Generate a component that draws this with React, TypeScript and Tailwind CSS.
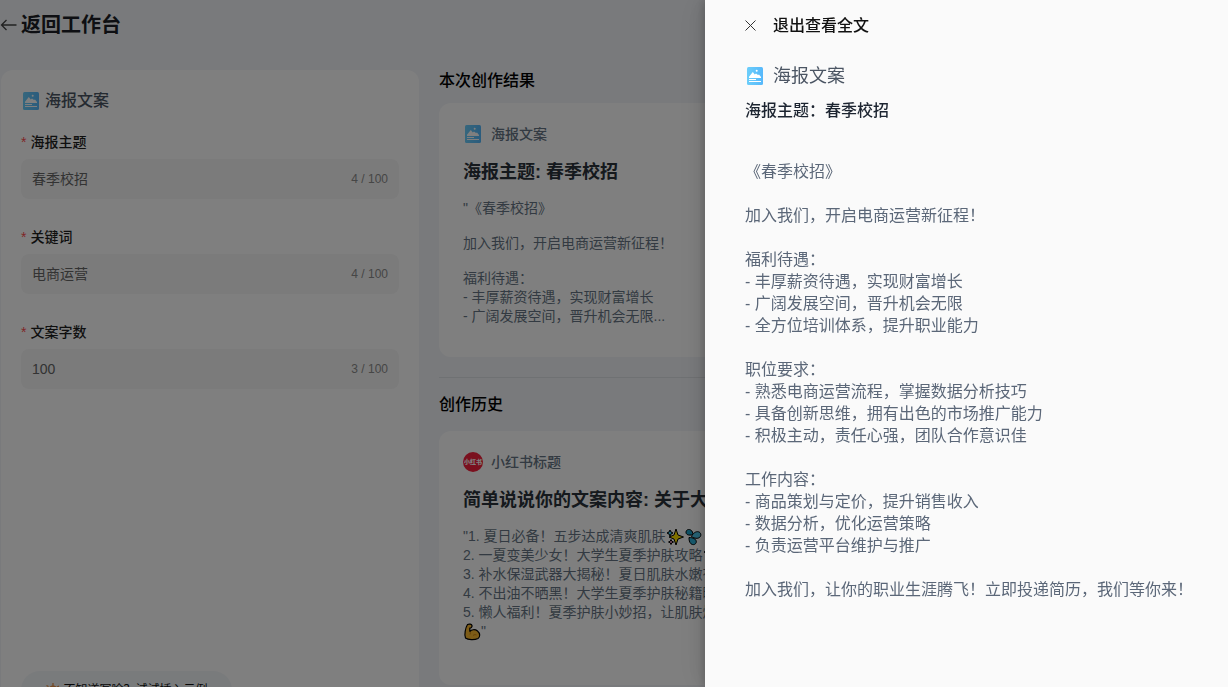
import React from "react";

type PosterIconProps = { className?: string };

function PosterIcon({ className }: PosterIconProps) {
  return (
    <svg viewBox="0 0 16 18" className={className} aria-hidden="true">
      <defs>
        <linearGradient id="poster-fill" x1="0" y1="0" x2="1" y2="0">
          <stop offset="0" stopColor="#6ccefa" />
          <stop offset="1" stopColor="#56b8fb" />
        </linearGradient>
      </defs>
      <rect width="16" height="18" rx="1.5" fill="url(#poster-fill)" />
      <path d="M2 11V9.800L5.800 5L7.800 7.600L9 6.400L11 8L12 7.500L14 10V11Z" fill="#fff" />
      <circle cx="9.700" cy="3.800" r="1" fill="#fff" />
      <path d="M2 12.500h7M2 14.500h12" stroke="#fff" strokeWidth="1" />
    </svg>
  );
}

function RedBookIcon() {
  return (
    <span className="flex size-5 shrink-0 items-center justify-center rounded-full bg-[#f5203c] text-[6px] leading-none font-black whitespace-nowrap text-white">
      小红书
    </span>
  );
}

function SparklesEmoji() {
  return (
    <svg viewBox="0 0 18 18" className="inline size-[18px] align-middle" role="img" aria-label="sparkles">
      <g stroke="#000" strokeWidth="1" strokeLinejoin="round">
        <path d="M10 1 L12 7 L17.500 9 L12 11 L10 17 L8 11 L3 9 L8 7 Z" fill="#fde000" />
        <path d="M4 2 L5 4 L7 5 L5 6 L4 8 L3 6 L1 5 L3 4 Z" fill="#3fc8f0" />
        <path d="M5 11.500 L5.800 13.200 L7.500 14 L5.800 14.800 L5 16.500 L4.200 14.800 L2.500 14 L4.200 13.200 Z" fill="#f59ac0" />
      </g>
    </svg>
  );
}

function DropsEmoji() {
  return (
    <svg viewBox="0 0 18 18" className="inline size-[18px] align-middle" role="img" aria-label="water drops">
      <g stroke="#000" strokeWidth="1" strokeLinejoin="round">
        <path d="M9 6.500 C4.500 8 1.800 6.500 2 4 C2.300 1.500 5 .8 7 2.200 C8.300 3.200 8.800 4.500 9 6.500 Z" fill="#1fa5cc" />
        <path d="M7.500 8.500 C9 5 12 3.200 14.500 3.800 C17 4.500 17.600 7.500 15.800 9.200 C13.800 11 10.500 10.500 7.500 8.500 Z" fill="#4fc6ea" />
        <path d="M5 9.500 C9 9.500 12.300 11 12.300 13.800 C12.200 16.500 9 17.500 7 15.800 C5.300 14.200 5 12 5 9.500 Z" fill="#2fb4dc" />
      </g>
    </svg>
  );
}

function MuscleEmoji() {
  return (
    <svg viewBox="0 0 18 18" className="inline size-[18px] align-middle" role="img" aria-label="flexed arm">
      <path
        d="M4.500 1.500 C6 .8 8.500 1 9 2.500 C9.300 4 8 5 6.800 5 L6.800 8.500 C8.500 6.500 12 6 14.500 8 C17.500 10.500 17.200 14 15 15.500 C11.500 17.200 5 17 2.500 15 C1 12 2.500 4.500 4.500 1.500 Z"
        fill="#fbb92e"
        stroke="#000"
        strokeWidth="1.200"
        strokeLinejoin="round"
      />
      <path
        d="M6.800 8.500 C7.500 9.500 7.500 10.500 7 11.500 M10 12.500 C11 11.500 12.500 11.500 13.500 12"
        stroke="#c77f12"
        strokeWidth="1"
        fill="none"
      />
    </svg>
  );
}

function BulbIcon() {
  return (
    <svg viewBox="0 0 14 16" className="h-4 w-3.5" aria-hidden="true">
      <path d="M8 1v3M1.500 3.500l2 1M14 4l-2 1" stroke="#e8924a" strokeWidth="1.300" />
      <path d="M8 3.500a5 5 0 0 1 5 5V15H3V8.500a5 5 0 0 1 5-5Z" fill="#e8924a" />
      <path d="M5.500 8.500l1.200-1.500 1.200 1.500M8.500 8.500L9.700 7l1.200 1.500" stroke="#fff" strokeWidth="1" fill="none" />
    </svg>
  );
}

const fields = [
  { id: "topic", label: "海报主题", value: "春季校招" },
  { id: "keyword", label: "关键词", value: "电商运营" },
  { id: "length", label: "文案字数", value: "100" },
];

function Field({ id, label, value }: { id: string; label: string; value: string }) {
  return (
    <div className="mb-[27px]">
      <label htmlFor={id} className="flex h-7 items-start gap-1 text-sm leading-[22px] font-medium text-[#1f1f1f]">
        <span className="font-normal text-[#ff4d4f]">*</span>
        {label}
      </label>
      <div className="flex h-10 items-center rounded-lg bg-[#f6f6f6] px-[11px]">
        <input
          id={id}
          defaultValue={value}
          maxLength={100}
          className="min-w-0 flex-1 bg-transparent text-sm text-[#666] outline-none"
        />
        <span className="text-xs text-[#8c8c8c]">{value.length} / 100</span>
      </div>
    </div>
  );
}

type ResultCardProps = {
  icon: React.ReactNode;
  kind: string;
  title: string;
  children: React.ReactNode;
};

function ResultCard({ icon, kind, title, children }: ResultCardProps) {
  return (
    <article className="h-[254px] overflow-hidden rounded-xl bg-white px-6 pt-[21px]">
      <div className="flex h-5 items-center gap-2 text-sm font-medium text-[#667584]">
        <span className="flex w-5 justify-center">{icon}</span>
        {kind}
      </div>
      <h3 className="mt-3.5 truncate text-lg leading-7 font-bold text-[#2b323a]">{title}</h3>
      <div className="mt-[13px] text-sm leading-[19px] text-[#667584]">{children}</div>
    </article>
  );
}

const fullText = `《春季校招》

加入我们，开启电商运营新征程！

福利待遇：
- 丰厚薪资待遇，实现财富增长
- 广阔发展空间，晋升机会无限
- 全方位培训体系，提升职业能力

职位要求：
- 熟悉电商运营流程，掌握数据分析技巧
- 具备创新思维，拥有出色的市场推广能力
- 积极主动，责任心强，团队合作意识佳

工作内容：
- 商品策划与定价，提升销售收入
- 数据分析，优化运营策略
- 负责运营平台维护与推广

加入我们，让你的职业生涯腾飞！立即投递简历，我们等你来！`;

function FullTextDrawer() {
  return (
    <aside
      role="dialog"
      aria-label="退出查看全文"
      className="fixed inset-y-0 right-0 w-[523px] overflow-hidden bg-[#fafafa] pr-6 pl-10 shadow-[-6px_0_16px_rgba(0,0,0,0.08),-3px_0_6px_rgba(0,0,0,0.12),-9px_0_28px_rgba(0,0,0,0.05)]"
    >
      <button type="button" className="flex h-[52px] items-center gap-4 text-base font-medium text-[#111]">
        <svg viewBox="0 0 12 12" className="size-3" aria-hidden="true">
          <path d="M.5 .5l10 10M10.500 .5L.5 10.500" stroke="#333" strokeWidth="1" />
        </svg>
        退出查看全文
      </button>
      <div className="mt-2.5 flex h-7 items-center gap-2 text-lg text-[#4b5563]">
        <span className="flex w-5 justify-center">
          <PosterIcon className="h-[18px] w-4" />
        </span>
        海报文案
      </div>
      <h2 className="mt-[9px] text-base leading-6 font-medium text-[#1c2430]">海报主题：春季校招</h2>
      <div className="mt-[38px] text-base leading-[22px] whitespace-pre-wrap text-[#5b6778]">{fullText}</div>
    </aside>
  );
}

export default function App() {
  return (
    <div className="h-screen overflow-hidden bg-[#f3f5f9] font-['Liberation_Sans','Noto_Sans_CJK_SC',sans-serif]">
      <header className="flex h-[50px] items-center">
        <a href="#" className="flex items-center gap-1 text-xl font-bold text-[#1c1f26]">
          <svg viewBox="0 0 17 14" className="h-3.5 w-[17px]" aria-hidden="true">
            <path d="M6.500 2L1.500 7L6.500 12M1.500 7H16.500" fill="none" stroke="#444" strokeWidth="1.300" />
          </svg>
          返回工作台
        </a>
      </header>
      <main className="flex items-start gap-5 pt-5 pl-px">
        <section className="flex min-h-screen w-[418px] shrink-0 flex-col rounded-xl bg-white px-5 pt-[19px] pb-12">
          <h1 className="flex h-6 items-center gap-1 text-base font-medium text-[#4b5563]">
            <span className="flex w-5 justify-center">
              <PosterIcon className="h-[18px] w-4" />
            </span>
            海报文案
          </h1>
          <form className="mt-[18px]">
            {fields.map((f) => (
              <Field key={f.id} {...f} />
            ))}
          </form>
          <button
            type="button"
            className="mt-auto flex h-[38px] w-[211px] items-center justify-center gap-1 rounded-full bg-[#f3f6f9] text-xs text-[#111]"
          >
            <BulbIcon />
            不知道写啥？试试插入示例
          </button>
        </section>
        <section className="min-w-0 flex-1">
          <h2 className="h-[33px] text-base leading-[22px] font-medium text-black">本次创作结果</h2>
          <div className="grid grid-cols-2 gap-5 pr-5">
            <ResultCard icon={<PosterIcon className="h-[18px] w-4" />} kind="海报文案" title="海报主题: 春季校招">
              <p>"《春季校招》</p>
              <p className="mt-4">加入我们，开启电商运营新征程！</p>
              <p className="mt-4">福利待遇：</p>
              <p>- 丰厚薪资待遇，实现财富增长</p>
              <p>- 广阔发展空间，晋升机会无限...</p>
            </ResultCard>
          </div>
          <hr className="mt-5 border-[#dfe2e6]" />
          <h2 className="mt-4 h-[37px] text-base leading-[22px] font-medium text-black">创作历史</h2>
          <div className="grid grid-cols-2 gap-5 pr-5">
            <ResultCard icon={<RedBookIcon />} kind="小红书标题" title="简单说说你的文案内容: 关于大学生夏季护肤">
              <p className="h-[19px] whitespace-nowrap">
                "1. 夏日必备！五步达成清爽肌肤
                <SparklesEmoji />
                <DropsEmoji />
              </p>
              <p className="h-[19px] whitespace-nowrap">
                2. 一夏变美少女！大学生夏季护肤攻略
                <SparklesEmoji />
              </p>
              <p>3. 补水保湿武器大揭秘！夏日肌肤水嫩有光</p>
              <p>4. 不出油不晒黑！大学生夏季护肤秘籍曝光</p>
              <p>5. 懒人福利！夏季护肤小妙招，让肌肤焕发</p>
              <p className="h-[19px]">
                <MuscleEmoji />"
              </p>
            </ResultCard>
          </div>
        </section>
      </main>
      <div className="fixed inset-0 bg-black/50" />
      <FullTextDrawer />
    </div>
  );
}
